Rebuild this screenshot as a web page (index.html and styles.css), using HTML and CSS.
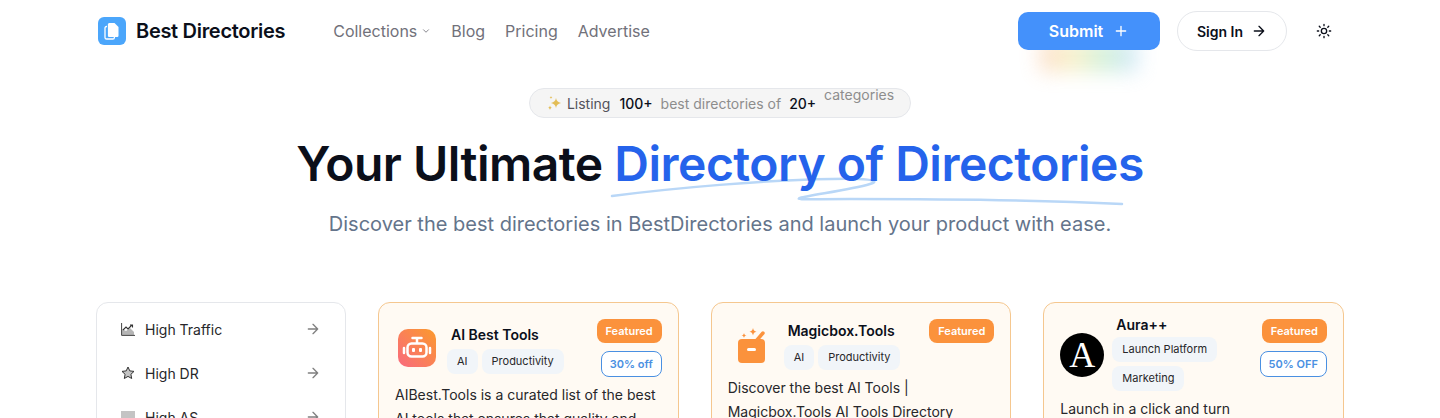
FILE: index.html
```html
<!DOCTYPE html>
<html lang="en">
  <head>
    <meta charset="UTF-8" />
    <meta name="viewport" content="width=device-width, initial-scale=1.0" />
    <title>Best Directories</title>
    <link rel="stylesheet" href="styles.css">
  </head>
  <body>
    <header class="navbar">
      <a class="brand" href="#">
        <span class="brand-icon">
          <svg width="16" height="18" viewBox="0 0 16 18" fill="none">
            <path d="M3 4.5H2.6C1.7 4.5 1 5.2 1 6.1v9.3c0 .9.7 1.6 1.6 1.6h6.2c.9 0 1.6-.7 1.6-1.6V15" stroke="#fff" stroke-width="1.3"/>
            <path d="M5.5 1h5l4 4v8.4c0 .9-.7 1.6-1.6 1.6H5.5c-.9 0-1.6-.7-1.6-1.6V2.6C3.9 1.7 4.6 1 5.5 1z" fill="#fff"/>
          </svg>
        </span>
        Best Directories
      </a>
      <nav class="nav-links">
        <a href="#">Collections
          <svg class="chevron" width="10" height="10" viewBox="0 0 24 24" fill="none" stroke="currentColor" stroke-width="2" stroke-linecap="round" stroke-linejoin="round"><path d="m6 9 6 6 6-6"/></svg>
        </a>
        <a href="#">Blog</a>
        <a href="#">Pricing</a>
        <a href="#">Advertise</a>
      </nav>
      <div class="nav-actions">
        <div class="submit-wrap">
          <span class="submit-glow"></span>
          <button class="btn-submit">Submit
            <svg width="16" height="16" viewBox="0 0 24 24" fill="none" stroke="currentColor" stroke-width="2" stroke-linecap="round"><path d="M5 12h14M12 5v14"/></svg>
          </button>
        </div>
        <button class="btn-signin">Sign In
          <svg width="16" height="16" viewBox="0 0 24 24" fill="none" stroke="currentColor" stroke-width="2" stroke-linecap="round" stroke-linejoin="round"><path d="M5 12h14M12 5l7 7-7 7"/></svg>
        </button>
        <button class="btn-theme" aria-label="Theme">
          <svg width="16" height="16" viewBox="0 0 24 24" fill="none" stroke="currentColor" stroke-width="2" stroke-linecap="round"><circle cx="12" cy="12" r="4"/><path d="M12 2v2M12 20v2M4.9 4.9l1.4 1.4M17.7 17.7l1.4 1.4M2 12h2M20 12h2M6.3 17.7l-1.4 1.4M19.1 4.9l-1.4 1.4"/></svg>
        </button>
      </div>
    </header>

    <section class="hero">
      <div class="pill">
        <svg width="17" height="17" viewBox="0 0 17 17" fill="#e3bd55"><path d="M10 3c.6 3 1.8 4.200 5 5-3.200.8-4.400 2-5 5-.6-3-1.800-4.200-5-5 3.200-.8 4.400-2 5-5z"/><path d="M4 10.500c.2 1.300.8 1.900 2 2.200-1.200.3-1.800.9-2 2.300-.2-1.400-.8-2-2-2.300 1.200-.3 1.800-.9 2-2.200z"/><path d="M5 1c.2.900.5 1.200 1.400 1.500C5.500 2.800 5.200 3.100 5 4c-.2-.9-.5-1.200-1.400-1.500C4.500 2.200 4.800 1.900 5 1z"/></svg>
        <span class="pill-label">Listing</span>
        <strong>100+</strong> best directories of <strong>20+</strong> categories
      </div>
      <h1>Your Ultimate <span class="accent">Directory of Directories
        <svg class="squiggle" width="530" height="30" viewBox="0 0 530 30" fill="none"><path d="M-2 22C60 14 150 6 218 5c30-1 52 1 38 5-20 6-60 11-70 14-6 2 10 1 50 1 90 0 190 1 272 5" stroke="#b9d7f7" stroke-width="2.500" stroke-linecap="round" stroke-linejoin="round"/></svg>
      </span></h1>
      <p class="subtitle">Discover the best directories in BestDirectories and launch your product with ease.</p>
    </section>

    <main class="content">
      <aside class="sidebar">
        <a class="side-item" href="#">
          <svg class="side-icon" width="14" height="14" viewBox="0 0 14 14"><path d="M1 1v12h12v-3L9 6 5 9 1 7z" fill="#b5b5b5"/><path d="M.6 1v12.400H14" fill="none" stroke="#444" stroke-width="1"/><path d="M2 8l3-3 2 2 4-4M9 3h2.500v2.500" fill="none" stroke="#333" stroke-width="1.100"/></svg>
          <span>High Traffic</span>
          <svg class="side-arrow" width="16" height="16" viewBox="0 0 24 24" fill="none" stroke="currentColor" stroke-width="2" stroke-linecap="round" stroke-linejoin="round"><path d="M5 12h14M12 5l7 7-7 7"/></svg>
        </a>
        <a class="side-item" href="#">
          <svg class="side-icon" width="14" height="14" viewBox="0 0 14 14"><path d="M7 1l1.800 3.900 4.200.5-3.100 2.900.8 4.200L7 10.400l-3.700 2.100.8-4.200L1 5.400l4.200-.5z" fill="#c4c4c4" stroke="#333" stroke-width="1" stroke-linejoin="round"/></svg>
          <span>High DR</span>
          <svg class="side-arrow" width="16" height="16" viewBox="0 0 24 24" fill="none" stroke="currentColor" stroke-width="2" stroke-linecap="round" stroke-linejoin="round"><path d="M5 12h14M12 5l7 7-7 7"/></svg>
        </a>
        <a class="side-item" href="#">
          <svg class="side-icon" width="14" height="14" viewBox="0 0 14 14"><rect x="0" y="1" width="14" height="12" fill="#c4c4c4"/></svg>
          <span>High AS</span>
          <svg class="side-arrow" width="16" height="16" viewBox="0 0 24 24" fill="none" stroke="currentColor" stroke-width="2" stroke-linecap="round" stroke-linejoin="round"><path d="M5 12h14M12 5l7 7-7 7"/></svg>
        </a>
      </aside>

      <article class="card">
        <div class="card-head">
          <div class="card-logo">
            <svg width="38" height="38" viewBox="0 0 38 38">
              <defs><linearGradient id="robotBg" x1="1" y1="0" x2="0" y2="1"><stop offset="0" stop-color="#fb9a2c"/><stop offset="1" stop-color="#f9697f"/></linearGradient></defs>
              <rect width="38" height="38" rx="10" fill="url(#robotBg)"/>
              <path d="M19 9v5" stroke="#fff" stroke-width="2.500"/><path d="M14.500 9h9" stroke="#fff" stroke-width="2.500" stroke-linecap="round"/>
              <rect x="9.500" y="14.500" width="19" height="13" rx="4" fill="none" stroke="#fff" stroke-width="2.500"/>
              <path d="M6 19v5M32 19v5" stroke="#fff" stroke-width="2.500" stroke-linecap="round"/>
              <rect x="14" y="19" width="3" height="4" rx="1" fill="#fff"/><rect x="21" y="19" width="3" height="4" rx="1" fill="#fff"/>
            </svg>
          </div>
          <div class="card-info">
            <h3>AI Best Tools</h3>
            <div class="tags"><span class="tag">AI</span><span class="tag">Productivity</span></div>
          </div>
          <div class="card-badges">
            <span class="badge-featured">Featured</span>
            <span class="badge-off">30% off</span>
          </div>
        </div>
        <p class="card-desc">AIBest.Tools is a curated list of the best AI tools that ensures that quality and</p>
      </article>

      <article class="card card-magic">
        <div class="card-head">
          <div class="card-logo">
            <svg width="30" height="36" viewBox="0 0 30 36" fill="#fb923c">
              <rect x="1" y="12" width="27" height="24" rx="4"/>
              <rect x="10" y="21" width="9" height="3" rx="1.500" fill="#fff"/>
              <path d="M16 6c.5 2.500 1.300 3.200 3.500 3.700-2.200.5-3 1.200-3.500 3.700-.5-2.500-1.300-3.200-3.500-3.700C14.700 9.200 15.500 8.500 16 6z" transform="translate(0 -5)"/>
              <path d="M7 7c.3 1.700.9 2.200 2.500 2.500C7.900 9.800 7.300 10.300 7 12c-.3-1.700-.9-2.200-2.500-2.500C6.100 9.200 6.700 8.700 7 7z" transform="translate(0 -1)"/>
              <path d="M20 13l6-7" stroke="#fb923c" stroke-width="3.500" stroke-linecap="round"/>
            </svg>
          </div>
          <div class="card-info">
            <h3>Magicbox.Tools</h3>
            <div class="tags"><span class="tag">AI</span><span class="tag">Productivity</span></div>
          </div>
          <div class="card-badges">
            <span class="badge-featured">Featured</span>
          </div>
        </div>
        <p class="card-desc">Discover the best AI Tools | Magicbox.Tools AI Tools Directory</p>
      </article>

      <article class="card card-aura">
        <div class="card-head">
          <div class="card-logo">
            <span class="aura-logo">A</span>
          </div>
          <div class="card-info">
            <h3>Aura++</h3>
            <div class="tags"><span class="tag">Launch Platform</span><span class="tag">Marketing</span></div>
          </div>
          <div class="card-badges">
            <span class="badge-featured">Featured</span>
            <span class="badge-off">50% OFF</span>
          </div>
        </div>
        <p class="card-desc">Launch in a click and turn</p>
      </article>
    </main>
  </body>
</html>
```

FILE: styles.css
```css
* {
  box-sizing: border-box;
}
html,
body {
  margin: 0;
  height: 100vh;
  overflow: hidden;
}
body {
  font-family: Inter, "Noto Sans", sans-serif;
  color: #0b0f1a;
  background-color: #fff;
}
a {
  color: inherit;
  text-decoration: none;
}
button {
  font-family: inherit;
  cursor: pointer;
}
.navbar {
  display: flex;
  align-items: center;
  height: 62px;
  padding: 0 96px 0 98px;
}
.brand {
  display: flex;
  align-items: center;
  gap: 10px;
  font-size: 20px;
  font-weight: 600;
  letter-spacing: -0.3px;
}
.brand-icon {
  display: flex;
  align-items: center;
  justify-content: center;
  width: 28px;
  height: 28px;
  border-radius: 6px;
  background-color: #4ba6fb;
}
.nav-links {
  display: flex;
  gap: 20px;
  margin-left: 48px;
  font-size: 16px;
  color: #71717a;
}
.nav-links a {
  display: flex;
  align-items: center;
  gap: 4px;
}
.nav-actions {
  display: flex;
  align-items: center;
  margin-left: auto;
}
.submit-wrap {
  position: relative;
}
.submit-glow {
  position: absolute;
  left: 22px;
  right: 22px;
  top: 28px;
  height: 32px;
  filter: blur(10px);
  opacity: 0.45;
  background: linear-gradient(90deg, #f9b58a, #f2e38f, #9fe0b0, #9ccdf8);
}
.btn-submit {
  position: relative;
  display: flex;
  align-items: center;
  justify-content: center;
  gap: 10px;
  width: 142px;
  height: 38px;
  border: none;
  border-radius: 10px;
  background-color: #4491fb;
  color: #fff;
  font-size: 16px;
  font-weight: 600;
}
.btn-signin {
  display: flex;
  align-items: center;
  justify-content: center;
  gap: 8px;
  width: 110px;
  height: 40px;
  margin-left: 17px;
  border: 1px solid #e5e7eb;
  border-radius: 20px;
  background-color: #fff;
  color: #0b0f1a;
  font-size: 14px;
  font-weight: 600;
}
.btn-theme {
  display: flex;
  width: 16px;
  height: 16px;
  margin: 0 12px 0 29px;
  padding: 0;
  border: none;
  background: none;
  color: #0b0f1a;
}
.hero {
  display: flex;
  flex-direction: column;
  align-items: center;
  padding-top: 26px;
}
.pill {
  display: flex;
  align-items: center;
  gap: 4px;
  height: 30px;
  padding: 0 16px;
  border: 1px solid #e5e7eb;
  border-radius: 15px;
  background-color: #f5f5f5;
  font-size: 14px;
  color: #8d8d8d;
  white-space: pre-wrap;
}
.pill strong {
  font-weight: 500;
  color: #0b0f1a;
}
.pill-label {
  margin-right: 5px;
  color: #52525b;
}
h1 {
  margin: 16px 0 0;
  font-size: 48px;
  line-height: 60px;
  font-weight: 600;
  letter-spacing: -0.5px;
  color: #0b0f1a;
}
.accent {
  position: relative;
  z-index: 0;
  color: #2563eb;
}
.squiggle {
  position: absolute;
  left: 0;
  top: 40px;
  z-index: -1;
  overflow: visible;
}
.subtitle {
  margin: 16px 0 0;
  font-size: 20px;
  line-height: 28px;
  color: #64748b;
}
.content {
  display: grid;
  grid-template-columns: 250px repeat(3, 1fr);
  gap: 32px;
  margin-top: 64px;
  padding: 0 96px;
}
.sidebar {
  height: 400px;
  padding: 4px 24px;
  border: 1px solid #e5e7eb;
  border-radius: 12px;
}
.side-item {
  display: flex;
  align-items: center;
  height: 44px;
  font-size: 14px;
  color: #27272a;
}
.side-icon {
  margin-right: 10px;
}
.side-arrow {
  margin-left: auto;
  color: #808080;
}
.card {
  height: 300px;
  padding: 16px;
  border: 1px solid #f5c78f;
  border-radius: 12px;
  background-color: #fffaf3;
}
.card-head {
  display: flex;
  align-items: center;
}
.card-logo {
  display: flex;
  align-items: center;
  justify-content: center;
  flex: none;
  width: 44px;
  margin-right: 8px;
}
.card-magic .card-logo {
  width: 48px;
}
.aura-logo {
  display: flex;
  align-items: center;
  justify-content: center;
  width: 44px;
  height: 44px;
  border-radius: 50%;
  background-color: #000;
  color: #fff;
  font-family: "Liberation Serif", serif;
  font-size: 36px;
}
.card-info {
  flex: 1;
}
.card-info h3 {
  margin: 0 0 2px 4px;
  font-size: 14px;
  line-height: 24px;
  font-weight: 600;
}
.tags {
  display: flex;
  flex-wrap: wrap;
  gap: 4px;
}
.tag {
  height: 25px;
  padding: 0 10px;
  border-radius: 8px;
  background-color: #f1f5f9;
  font-size: 11px;
  line-height: 25px;
  color: #27272a;
}
.card-badges {
  display: flex;
  flex-direction: column;
  align-items: flex-end;
  align-self: flex-start;
  gap: 8px;
}
.badge-featured {
  height: 24px;
  padding: 0 9px;
  border-radius: 8px;
  background-color: #fb923c;
  color: #fff;
  font-size: 11px;
  font-weight: 600;
  line-height: 24px;
}
.badge-off {
  height: 26px;
  padding: 0 8px;
  border: 1px solid #4a90e2;
  border-radius: 8px;
  background-color: #fff;
  color: #4a90e2;
  font-size: 11px;
  font-weight: 600;
  line-height: 24px;
}
.card-desc {
  margin: 6px 0 0;
  font-size: 14px;
  line-height: 24px;
  color: #27272a;
}
.card-aura .card-info h3 {
  margin-top: -4px;
  line-height: 20px;
}
```
